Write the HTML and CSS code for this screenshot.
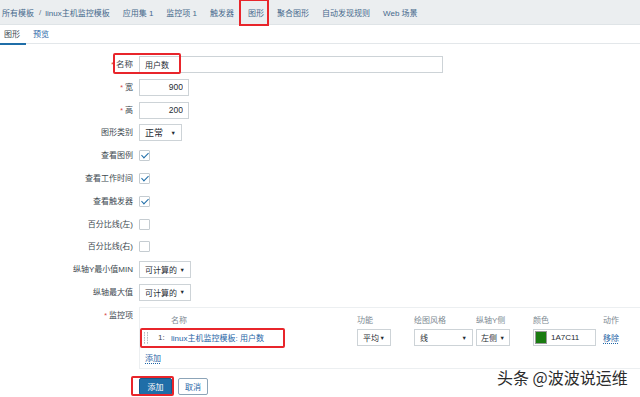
FILE: index.html
```html
<!DOCTYPE html>
<html lang="zh">
<head>
<meta charset="utf-8">
<link rel="stylesheet" href="styles.css">
</head>
<body>
<nav class="crumbs">
  <a class="nav-link first">所有模板</a>
  <span class="sep">/</span>
  <a class="nav-link host">linux主机监控模板</a>
  <a class="nav-link">应用集 1</a>
  <a class="nav-link">监控项 1</a>
  <a class="nav-link">触发器</a>
  <a class="nav-link current">图形</a>
  <a class="nav-link">聚合图形</a>
  <a class="nav-link">自动发现规则</a>
  <a class="nav-link">Web 场景</a>
</nav>
<div class="tabs">
  <span class="tab active">图形</span>
  <span class="tab link">预览</span>
</div>
<form class="form">
  <label class="lbl req mark-wrap">名称<span class="mark mark-name"></span></label>
  <div class="ctl"><input class="txt wide" value="用户数"></div>

  <label class="lbl req">宽</label>
  <div class="ctl"><input class="txt num" value="900"></div>

  <label class="lbl req">高</label>
  <div class="ctl"><input class="txt num" value="200"></div>

  <label class="lbl">图形类别</label>
  <div class="ctl"><span class="sel s-type">正常<i class="arr">▼</i></span></div>

  <label class="lbl">查看图例</label>
  <div class="ctl"><span class="cb on"></span></div>

  <label class="lbl">查看工作时间</label>
  <div class="ctl"><span class="cb on"></span></div>

  <label class="lbl">查看触发器</label>
  <div class="ctl"><span class="cb on"></span></div>

  <label class="lbl">百分比线(左)</label>
  <div class="ctl"><span class="cb"></span></div>

  <label class="lbl">百分比线(右)</label>
  <div class="ctl"><span class="cb"></span></div>

  <label class="lbl">纵轴Y最小值MIN</label>
  <div class="ctl"><span class="sel s-calc">可计算的<i class="arr">▼</i></span></div>

  <label class="lbl">纵轴最大值</label>
  <div class="ctl"><span class="sel s-calc">可计算的<i class="arr">▼</i></span></div>

  <label class="lbl req top">监控项</label>
  <div class="items">
    <div class="irow head">
      <span class="c-name">名称</span>
      <span class="c-fn">功能</span>
      <span class="c-style">绘图风格</span>
      <span class="c-side">纵轴Y侧</span>
      <span class="c-color">颜色</span>
      <span class="c-act">动作</span>
    </div>
    <div class="irow data">
      <span class="c-name name-cell"><span class="drag"></span><span class="idx">1:</span><a class="link">linux主机监控模板: 用户数</a><span class="mark mark-item"></span></span>
      <span class="c-fn"><span class="sel s-fn">平均<i class="arr">▼</i></span></span>
      <span class="c-style"><span class="sel s-style">线<i class="arr">▼</i></span></span>
      <span class="c-side"><span class="sel s-side">左侧<i class="arr">▼</i></span></span>
      <span class="c-color"><span class="color-in"><span class="swatch"></span>1A7C11</span></span>
      <span class="c-act"><a class="link u">移除</a></span>
    </div>
    <a class="link u add">添加</a>
  </div>

  <div></div>
  <div class="buttons">
    <span class="btn-wrap"><span class="btn primary">添加</span><span class="mark mark-btn"></span></span>
    <span class="btn">取消</span>
  </div>
</form>
<div class="watermark">头条 @波波说运维</div>
</body>
</html>
```
FILE: styles.css
```css
* { box-sizing: border-box; }
html, body { margin: 0; padding: 0; }
body {
  width: 640px;
  height: 397px;
  overflow: hidden;
  background: #fff;
  font-family: "Liberation Sans", "Noto Sans CJK SC", sans-serif;
  font-size: 8px;
  color: #3d4950;
  position: relative;
}
a { text-decoration: none; }

.crumbs {
  height: 25px;
  background: #ebeef0;
  border-bottom: 1px solid #dfe4e7;
  display: flex;
  align-items: center;
  padding-left: 2px;
  white-space: nowrap;
}
.nav-link { color: #46698c; margin-right: 13px; }
.nav-link.first { margin-right: 5px; }
.sep { margin-right: 4px; color: #6b7a85; }
.nav-link.current {
  outline: 2px solid #e8252b;
  padding: 6px 3px 6px 7px;
  margin-left: -6px;
  margin-right: 10px;
}

.tabs {
  height: 19px;
  border-bottom: 1px solid #e3e7ea;
  display: flex;
  align-items: center;
  gap: 13px;
  padding-left: 4px;
}
.tab { color: #3d4950; position: relative; height: 19px; line-height: 19px; }
.tab.link { color: #1f65a6; }
.tab.active::after {
  content: "";
  position: absolute;
  left: -4px;
  right: -6px;
  bottom: -1px;
  height: 2px;
  background: #1f6ea8;
}

.form {
  display: grid;
  grid-template-columns: 133px 1fr;
  column-gap: 6px;
  row-gap: 5.8px;
  grid-auto-rows: 17px;
  margin-top: 12px;
}
.lbl {
  text-align: right;
  line-height: 17px;
  color: #3d4950;
  white-space: nowrap;
}
.lbl.req::before { content: "* "; color: #d64541; font-size: 7px; }
.mark-wrap { position: relative; font-size: 8.5px; }
.mark { position: absolute; border: 2px solid #e8252b; border-radius: 2px; pointer-events: none; }
.mark-name { left: 113px; top: -3px; width: 68px; height: 21px; }

.ctl { display: flex; align-items: center; }
.txt {
  height: 17px;
  border: 1px solid #cdd3d7;
  font: inherit;
  color: #1f2c33;
  padding: 0 5px;
  background: #fff;
}
.txt.wide { width: 304px; }
.txt.num { width: 50px; text-align: right; font-size: 8.5px; }

.sel {
  height: 17px;
  border: 1px solid #cdd3d7;
  display: inline-flex;
  align-items: center;
  justify-content: space-between;
  padding: 0 5px;
  color: #1f2c33;
  background: #fff;
  white-space: nowrap;
  flex-shrink: 0;
}
.arr { font-style: normal; font-size: 5.5px; color: #1f2c33; }
.s-type { width: 43px; font-size: 9px; }
.s-calc { width: 52px; }
.s-fn { width: 34px; }
.s-style { width: 59px; }
.s-side { width: 34px; padding: 0 4px; }

.cb {
  width: 11px;
  height: 11px;
  border: 1px solid #c5ccd1;
  border-radius: 1px;
  background: #fff;
  position: relative;
}
.cb.on::after {
  content: "";
  position: absolute;
  left: 3px;
  top: 0px;
  width: 3px;
  height: 6px;
  border: solid #1f6ea8;
  border-width: 0 1.5px 1.5px 0;
  transform: rotate(45deg);
}

.items {
  grid-row: span 3;
  border: 1px solid #eceff1;
  border-right: none;
  height: 62px;
  position: relative;
  padding-top: 5px;
}
.irow { display: flex; align-items: center; white-space: nowrap; }
.irow.head { height: 14px; color: #7d8a93; }
.irow.data { height: 18px; margin-top: 2px; }
.c-name { width: 217px; padding-left: 31px; flex-shrink: 0; }
.c-fn { width: 57px; flex-shrink: 0; }
.c-style { width: 62px; flex-shrink: 0; }
.c-side { width: 57px; flex-shrink: 0; }
.c-color { width: 70px; flex-shrink: 0; }
.c-act { width: 40px; flex-shrink: 0; }
.name-cell { display: flex; align-items: center; padding-left: 4px; position: relative; height: 18px; }
.drag {
  width: 4px;
  height: 12px;
  background-image: radial-gradient(circle at 0.75px 0.75px, #b3bcc2 0.6px, transparent 0.8px);
  background-size: 3px 2.5px;
  margin-right: 10px;
}
.idx { color: #3d4950; width: 13px; }
.link { color: #1f65a6; }
.link.u { text-decoration: underline dotted; text-underline-offset: 2px; }
.mark-item { left: 0; top: -1px; width: 145px; height: 20px; }
.color-in {
  width: 63px;
  height: 17px;
  border: 1px solid #cdd3d7;
  display: inline-flex;
  align-items: center;
  padding-left: 1px;
  color: #1f2c33;
  gap: 4px;
}
.swatch { width: 12px; height: 13px; background: #1a7c11; border: 1px solid #999; }
.add { display: inline-block; margin-left: 5px; margin-top: 5px; }

.buttons {
  grid-column: 2;
  display: flex;
  gap: 6px;
  align-items: center;
  margin-top: 5px;
}
.btn-wrap { position: relative; display: inline-flex; }
.btn {
  height: 17px;
  padding: 0 6px;
  display: inline-flex;
  align-items: center;
  border: 1px solid #8ca4b8;
  color: #1f65a6;
  background: #fff;
  border-radius: 2px;
}
.btn.primary {
  width: 33px;
  justify-content: center;
  background: #1f6ea8;
  border-color: #165a8c;
  color: #fff;
}
.mark-btn { left: -8px; top: -2px; width: 43px; height: 20px; }

.watermark {
  position: absolute;
  left: 497px;
  top: 365px;
  font-family: "Noto Sans CJK SC", sans-serif;
  font-size: 16px;
  color: #2b2b2b;
  text-shadow: 0 0 2px #fff, 0 0 2px #fff;
}
```
